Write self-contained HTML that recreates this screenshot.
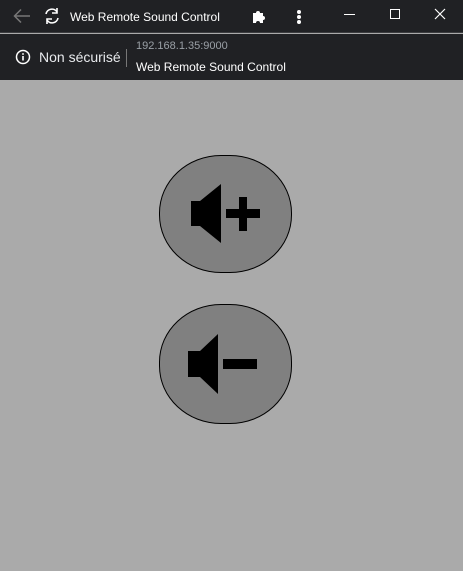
<!DOCTYPE html>
<html><head><meta charset="utf-8"><style>
*{margin:0;padding:0;box-sizing:border-box}
body{width:463px;height:571px;background:#aaaaaa;font-family:"Liberation Sans",sans-serif;position:relative;overflow:hidden}
.top{position:absolute;left:0;top:0;width:463px;height:33px;background:#202124;border-bottom:1px solid #3c3d40}
.addr{position:absolute;left:0;top:34px;width:463px;height:46px;background:#202124}
.t{position:absolute;color:#fff;white-space:nowrap}
.btn{position:absolute;left:159px;width:133px;background:#808080;border:1px solid #000;border-radius:62px/58px}
</style></head><body>
<div class="top">
<svg style="position:absolute;left:13px;top:8px" width="18" height="16" viewBox="0 0 18 16"><path d="M17 8H2M8 1.5L1.5 8 8 14.5" stroke="#777" stroke-width="1.5" fill="none"/></svg>
<svg style="position:absolute;left:43px;top:7px" width="18" height="18" viewBox="0 0 18 18"><path d="M3 7A6 6 0 0 1 14 5M15 11A6 6 0 0 1 4 13" stroke="#fff" stroke-width="1.6" fill="none"/><path d="M14 1v5h-5M4 17v-5h5" stroke="#fff" stroke-width="1.6" fill="none"/></svg>
<div class="t" style="left:70px;top:10px;font-size:12px">Web Remote Sound Control</div>
<svg style="position:absolute;left:251px;top:8px" width="16" height="16" viewBox="0 0 16 16"><path d="M2 5h3a2 2 0 1 1 4 0h3v3a2 2 0 1 1 0 4v3H9a2 2 0 1 0-4 0H2z" fill="#fff"/></svg>
<div style="position:absolute;left:297px;top:10px;width:4px;height:4px;border-radius:2px;background:#fff;box-shadow:0 5px #fff,0 10px #fff"></div>
<div style="position:absolute;left:344px;top:14px;width:11px;height:1px;background:#fff"></div>
<div style="position:absolute;left:390px;top:9px;width:10px;height:10px;border:1px solid #fff"></div>
<svg style="position:absolute;left:434px;top:8px" width="12" height="12" viewBox="0 0 12 12"><path d="M1 1l10 10M11 1L1 11" stroke="#fff" stroke-width="1.2"/></svg>
</div>
<div class="addr">
<svg style="position:absolute;left:15px;top:15px" width="16" height="16" viewBox="0 0 16 16"><circle cx="8" cy="8" r="6.5" stroke="#fff" stroke-width="1.5" fill="none"/><rect x="7.2" y="7" width="1.6" height="4.5" fill="#fff"/><rect x="7.2" y="4.2" width="1.6" height="1.6" fill="#fff"/></svg>
<div class="t" style="left:39px;top:15px;font-size:14px;color:#e8eaed">Non sécurisé</div>
<div style="position:absolute;left:126px;top:15px;width:1px;height:18px;background:#777"></div>
<div class="t" style="left:136px;top:6px;font-size:11px;color:#9aa0a6">192.168.1.35:9000</div>
<div class="t" style="left:136px;top:26px;font-size:12px;color:#fff">Web Remote Sound Control</div>
</div>
<div class="btn" style="top:155px;height:118px"></div>
<div class="btn" style="top:304px;height:120px"></div>
<svg style="position:absolute;left:0;top:0" width="463" height="571">
<path d="M191 201h9l21-17v59l-21-17h-9z" fill="#000"/>
<rect x="226" y="209" width="34" height="9"/><rect x="239" y="197" width="8" height="34"/>
<path d="M188 351h12l18-17v60l-18-17h-12z" fill="#000"/>
<rect x="223" y="359" width="34" height="10"/>
</svg>
</body></html>
